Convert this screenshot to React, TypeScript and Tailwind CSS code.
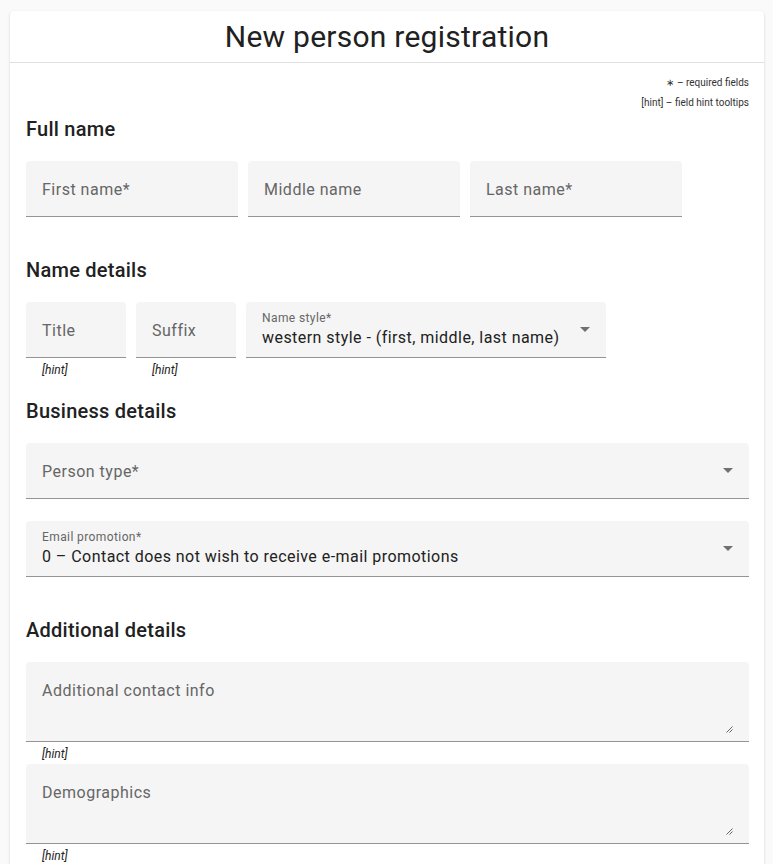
import React from 'react';

type FieldProps = {
  label: string;
  width?: string;
  value?: string;
  select?: boolean;
  textarea?: boolean;
  hint?: boolean;
};

function Arrow() {
  return (
    <svg width="10" height="5" viewBox="0 0 10 5" className="shrink-0 self-center">
      <polygon points="0,0 10,0 5,5" fill="rgba(0,0,0,0.54)" />
    </svg>
  );
}

function ResizeGrip() {
  return (
    <svg width="7" height="7" viewBox="0 0 7 7" className="absolute bottom-[8px] right-[16px]">
      <line x1="0.5" y1="6.5" x2="6.5" y2="0.5" stroke="#555" strokeWidth="0.9" />
      <line x1="3.5" y1="6.5" x2="6.5" y2="3.5" stroke="#555" strokeWidth="0.9" />
    </svg>
  );
}

function Field({ label, width = 'w-full', value, select, textarea, hint }: FieldProps) {
  return (
    <div className={`${width} shrink-0`}>
      {textarea ? (
        <div className="relative h-[80px] rounded-t-[4px] border-b border-[#949494] bg-[#f5f5f5] px-4 pt-[17px]">
          <span className="text-[16px] leading-6 tracking-[0.5px] text-[#666]">{label}</span>
          <ResizeGrip />
        </div>
      ) : (
        <div className="flex h-[56px] items-center rounded-t-[4px] border-b border-[#949494] bg-[#f5f5f5] px-4">
          {value ? (
            <div className="flex min-w-0 flex-1 flex-col self-start pt-[8px]">
              <span className="text-[12px] leading-4 tracking-[0.4px] text-[#666]">{label}</span>
              <span className="mt-[2px] whitespace-nowrap text-[16px] leading-5 tracking-[0.45px] text-[#212121]">{value}</span>
            </div>
          ) : (
            <span className="flex-1 pt-[3px] text-[16px] leading-6 tracking-[0.5px] text-[#666]">{label}</span>
          )}
          {select && <Arrow />}
        </div>
      )}
      <div className="h-[22px] px-4 pt-[1px] text-[12px] italic leading-[22px] text-[#222]">{hint ? '[hint]' : ''}</div>
    </div>
  );
}

function Heading({ children, first }: { children: React.ReactNode; first?: boolean }) {
  return (
    <h2 className={`${first ? '' : 'mt-[15px]'} mb-4 text-[20px] font-medium leading-8 tracking-[0.25px] text-[#212121]`}>
      {children}
    </h2>
  );
}

export default function App() {
  return (
    <div className="min-h-screen bg-[#fafafa] pl-[10px] pr-[9px] pt-[11px] font-['Roboto',sans-serif]">
      <div className="min-h-[900px] rounded-[4px] bg-white shadow-[0_2px_1px_-1px_rgba(0,0,0,0.2),0_1px_1px_0_rgba(0,0,0,0.14),0_1px_3px_0_rgba(0,0,0,0.12)]">
        <h1 className="border-b border-[#e0e0e0] pb-[9px] pt-[10px] text-center text-[30px] leading-8 tracking-[0.25px] text-[#212121]">
          New person registration
        </h1>
        <div className="pl-4 pr-[15px] pt-[10px]">
          <div className="text-right text-[10px] leading-5 text-[#333]">
            <div>∗ – required fields</div>
            <div>[hint] – field hint tooltips</div>
          </div>

          <Heading first>Full name</Heading>
          <div className="flex gap-[10px]">
            <Field label="First name*" width="w-[212px]" />
            <Field label="Middle name" width="w-[212px]" />
            <Field label="Last name*" width="w-[212px]" />
          </div>

          <Heading>Name details</Heading>
          <div className="flex gap-[10px]">
            <Field label="Title" width="w-[100px]" hint />
            <Field label="Suffix" width="w-[100px]" hint />
            <Field label="Name style*" width="w-[360px]" value="western style - (first, middle, last name)" select />
          </div>

          <Heading>Business details</Heading>
          <Field label="Person type*" select />
          <Field label="Email promotion*" value="0 – Contact does not wish to receive e-mail promotions" select />

          <Heading>Additional details</Heading>
          <Field label="Additional contact info" textarea hint />
          <Field label="Demographics" textarea hint />
        </div>
      </div>
    </div>
  );
}
